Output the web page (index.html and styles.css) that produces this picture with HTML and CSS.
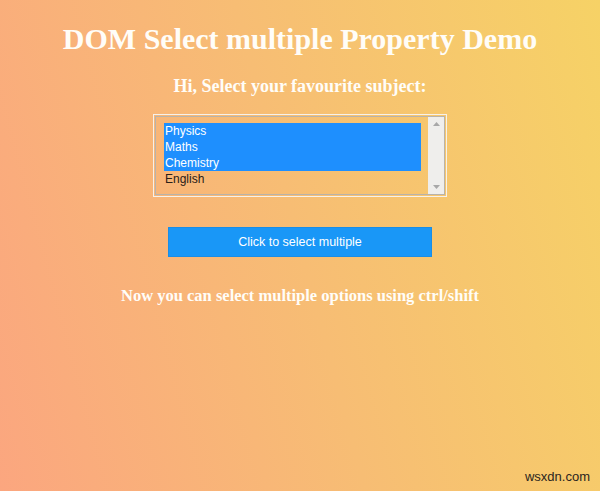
FILE: index.html
```html
<!DOCTYPE html>
<html lang="en">
<head>
<meta charset="utf-8">
<title>DOM Select multiple Property Demo</title>
<link rel="stylesheet" href="styles.css">
</head>
<body>
<main class="page">
  <h1 class="title">DOM Select multiple Property Demo</h1>
  <h3 class="subtitle">Hi, Select your favourite subject:</h3>
  <div class="listbox" role="listbox" aria-multiselectable="true">
    <div class="listbox-inner">
      <ul class="options">
        <li class="option selected">Physics</li>
        <li class="option selected">Maths</li>
        <li class="option selected">Chemistry</li>
        <li class="option">English</li>
      </ul>
      <div class="scrollbar">
        <svg class="arrow" width="9" height="6" viewBox="0 0 9 6"><path d="M4.5 1 L8 5 L1 5 Z" fill="#a8a8a8"/></svg>
        <svg class="arrow" width="9" height="6" viewBox="0 0 9 6"><path d="M1 1 L8 1 L4.5 5 Z" fill="#a8a8a8"/></svg>
      </div>
    </div>
  </div>
  <button class="btn" type="button">Click to select multiple</button>
  <h4 class="note">Now you can select multiple options using ctrl/shift</h4>
</main>
<div class="watermark">wsxdn.com</div>
</body>
</html>
```
FILE: styles.css
```css
html, body {
  margin: 0;
  padding: 0;
}
body {
  min-height: 491px;
  background: linear-gradient(75deg, #fba67f 0%, #f7bd74 50%, #f6d266 100%);
  font-family: "Liberation Serif", "Times New Roman", serif;
  color: #fffdf8;
  position: relative;
  overflow: hidden;
}
.page {
  display: flex;
  flex-direction: column;
  align-items: center;
  text-align: center;
}
.title {
  margin: 24px 0 0;
  font-size: 30px;
  line-height: 30px;
  font-weight: bold;
}
.subtitle {
  margin: 23px 0 0;
  font-size: 18px;
  line-height: 18px;
  font-weight: bold;
}
.listbox {
  margin-top: 19px;
  width: 294px;
  height: 83px;
  box-sizing: border-box;
  border: 1px solid #f6f1ea;
  padding: 1px;
}
.listbox-inner {
  height: 100%;
  box-sizing: border-box;
  border: 1px solid #b9b3aa;
  display: flex;
}
.options {
  list-style: none;
  margin: 0;
  padding: 6px 7px 0 8px;
  flex: 1;
  text-align: left;
  font-family: "Liberation Sans", Arial, sans-serif;
  font-size: 12px;
  line-height: 16px;
  color: #2a2018;
}
.option {
  padding-left: 1px;
}
.option.selected {
  background: #1e8ffe;
  color: #ffffff;
}
.scrollbar {
  width: 16px;
  background: #efeeec;
  display: flex;
  flex-direction: column;
  justify-content: space-between;
  align-items: center;
  padding: 4px 0;
  box-sizing: border-box;
}
.arrow {
  display: block;
}
.btn {
  margin-top: 30px;
  width: 264px;
  height: 30px;
  background: #1997f7;
  border: 1px solid #1a8de6;
  color: #ffffff;
  font-family: "Liberation Sans", Arial, sans-serif;
  font-size: 12.5px;
  padding: 0;
  cursor: pointer;
}
.note {
  margin: 31px 0 0;
  font-size: 16.5px;
  line-height: 16px;
  font-weight: bold;
}
.watermark {
  position: absolute;
  right: 10px;
  bottom: 7px;
  font-family: "Liberation Sans", Arial, sans-serif;
  font-size: 13px;
  color: #2b2520;
}
```
